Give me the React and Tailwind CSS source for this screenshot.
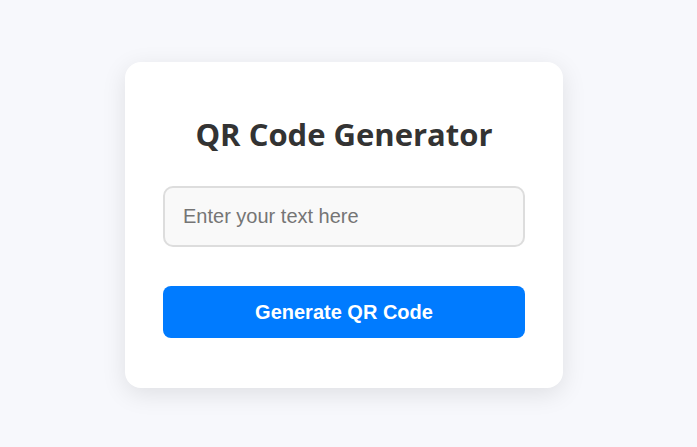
import React, { useState } from 'react';

function App() {
    const [text, setText] = useState('');

    return (
        <div className="min-h-screen bg-[#f7f8fc] flex justify-center pt-[62px] pr-[9px]">
            <div className="w-[438px] h-[326px] bg-white rounded-[16px] shadow-[0_6px_24px_rgba(0,0,0,0.1)] px-[38px] pt-[40px]">
                <h1 className="h-[64px] mb-[20px] text-center text-[31px] leading-[64px] font-bold text-[#333] font-['Open_Sans',sans-serif]">
                    QR Code Generator
                </h1>
                <input
                    type="text"
                    value={text}
                    onChange={(e) => setText(e.target.value)}
                    placeholder="Enter your text here"
                    className="block w-full h-[61px] px-[18px] border-2 border-[#ddd] rounded-[10px] bg-[#f9f9f9] text-[20px] text-[#333] placeholder:text-[#757575] font-['Liberation_Sans',Arial,sans-serif] outline-none"
                />
                <button className="mt-[39px] block w-full h-[52px] bg-[#007bff] text-white text-[20px] font-bold rounded-[8px] font-['Liberation_Sans',Arial,sans-serif]">
                    Generate QR Code
                </button>
            </div>
        </div>
    );
}

export default App;
